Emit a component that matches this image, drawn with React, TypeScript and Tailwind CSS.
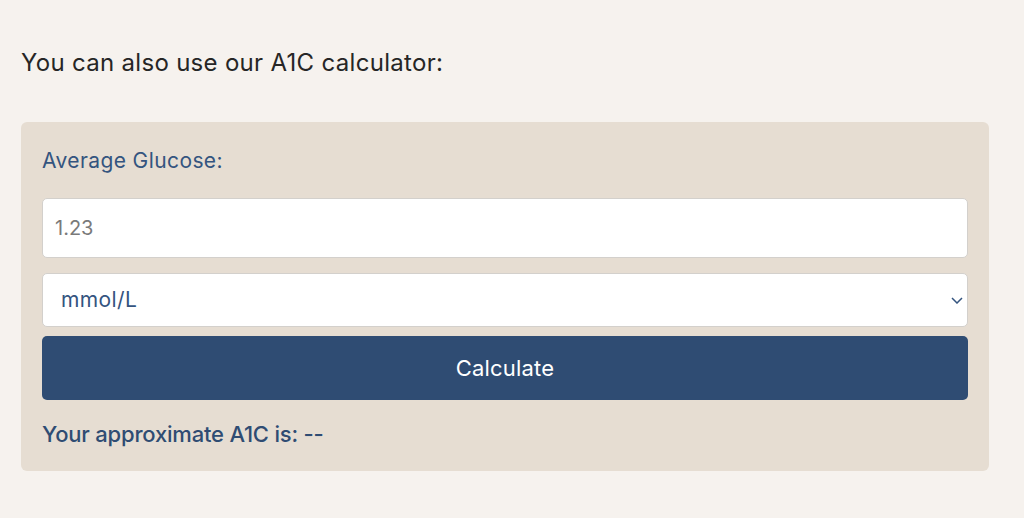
import { useState } from "react";

const App = () => {
  const [value, setValue] = useState("");
  const [unit, setUnit] = useState("mmol");
  const [result, setResult] = useState("--");

  const calculate = () => {
    const n = parseFloat(value);
    if (isNaN(n)) {
      setResult("--");
      return;
    }
    const mgdl = unit === "mmol" ? n * 18.0182 : n;
    setResult(((mgdl + 46.7) / 28.7).toFixed(1) + "%");
  };

  return (
    <div className="min-h-screen w-full bg-[#f6f2ee] px-[21px] pt-[44px] font-['Inter',sans-serif]">
      <p className="text-[24px] leading-[37px] tracking-[0.3px] text-[#262626]">
        You can also use our A1C calculator:
      </p>

      <div className="mt-[41px] w-[968px] rounded-[6px] bg-[#e6ddd2] px-[21px] pt-[24px] pb-[22px]">
        <label className="block text-[21px] leading-[30px] tracking-[0.4px] text-[#34547f]">
          Average Glucose:
        </label>

        <input
          type="text"
          value={value}
          onChange={(e) => setValue(e.target.value)}
          placeholder="1.23"
          className="mt-[22px] block h-[60px] w-full rounded-[5px] border border-[#d3d0cc] bg-white px-[12px] text-[20px] text-[#34547f] placeholder:text-[#7a7a7a] outline-none"
        />

        <div className="relative mt-[15px]">
          <select
            value={unit}
            onChange={(e) => setUnit(e.target.value)}
            className="block h-[54px] w-full appearance-none rounded-[5px] border border-[#d3d0cc] bg-white px-[18px] text-[21px] tracking-[0.4px] text-[#34547f] outline-none"
          >
            <option value="mmol">mmol/L</option>
            <option value="mgdl">mg/dL</option>
          </select>
          <svg
            className="pointer-events-none absolute right-[5px] top-[24px]"
            width="12"
            height="7"
            viewBox="0 0 12 7"
            fill="none"
          >
            <path d="M1 1l5 5 5-5" stroke="#34547f" strokeWidth="1.5" />
          </svg>
        </div>

        <button
          onClick={calculate}
          className="mt-[9px] block h-[64px] w-full rounded-[5px] bg-[#2f4c73] text-[22px] tracking-[0.2px] text-white"
        >
          Calculate
        </button>

        <p className="mt-[19px] text-[22px] leading-[30px] font-medium tracking-[-0.2px] text-[#2f4c73]">
          Your approximate A1C is: {result}
        </p>
      </div>
    </div>
  );
};

export default App;
